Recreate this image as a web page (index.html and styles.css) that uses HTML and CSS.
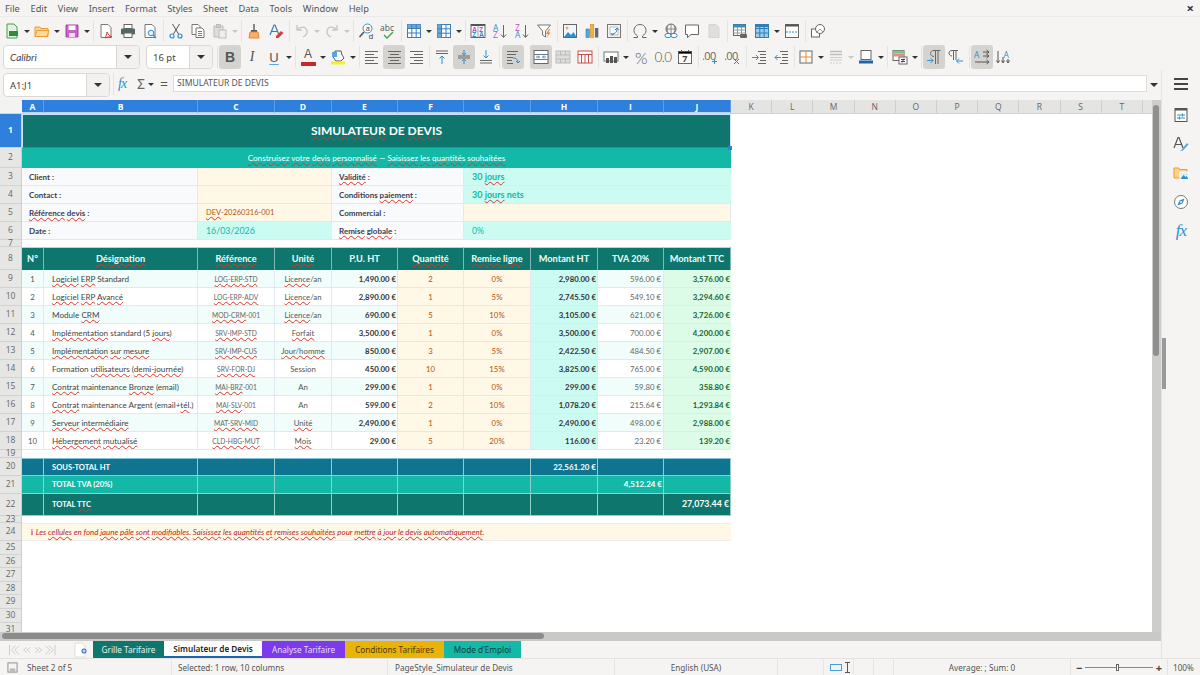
FILE: index.html
```html
<!DOCTYPE html>
<html lang="en">
<head>
	<meta charset="UTF-8">
	<title>Simulateur de Devis</title>
	<link rel="stylesheet" href="styles.css">
</head>
<body>
	<!-- menu -->
	<div class="menubar">
		<span>File</span><span>Edit</span><span>View</span><span>Insert</span><span>Format</span><span>Styles</span><span>Sheet</span><span>Data</span><span>Tools</span><span>Window</span><span>Help</span>
		<span class="close">×</span>
	</div>

	<!-- standard toolbar -->
	<div class="toolbar tb1">
		<div class="b"><svg viewBox="0 0 16 16"><path d="M3 1h7l3 3v11H3z" fill="#e4f3e4" stroke="#43a047"/><rect x="5" y="8" width="9" height="5" fill="#2e8b3d"/></svg></div><div class="d"></div>
		<div class="b"><svg viewBox="0 0 16 16"><path d="M1 4h5l1 1.500h7V13.500H1z" fill="#fbd28a" stroke="#ed9b33"/><path d="M1 13.500 3 7.500h12l-2 6z" fill="#fcdc9e" stroke="#ed9b33"/></svg></div><div class="d"></div>
		<div class="b"><svg viewBox="0 0 16 16"><path d="M2 2h12v12H2z" fill="#c765c7" stroke="#a845a8"/><rect x="4.500" y="2.500" width="7" height="4.500" fill="#fff"/><rect x="5" y="10" width="6" height="4" fill="#f0d8f0"/></svg></div><div class="d"></div>
		<div class="s"></div>
		<div class="b"><svg viewBox="0 0 16 16"><path d="M3 1.500h7l3 3v10H3z" fill="#fff" stroke="#777"/><path d="M9 9c1 3 3 4 5 5-3-.5-5 0-7 1 1-2 2-4 2-6z" fill="none" stroke="#d8382f"/></svg></div>
		<div class="b"><svg viewBox="0 0 16 16"><rect x="4" y="1.500" width="8" height="4" fill="#fff" stroke="#666"/><rect x="1" y="5.500" width="14" height="6" rx="1" fill="#566"/><rect x="4" y="10" width="8" height="4.500" fill="#fff" stroke="#666"/></svg></div>
		<div class="b"><svg viewBox="0 0 16 16"><path d="M3 1.500h7l3 3v10H3z" fill="#fff" stroke="#777"/><circle cx="9" cy="10" r="2.800" fill="#e3f1fa" stroke="#2f8fcf"/><path d="m11 12 3 3" stroke="#2f8fcf" stroke-width="1.300"/></svg></div>
		<div class="s"></div>
		<div class="b"><svg viewBox="0 0 16 16"><path d="M4.500 1 10.500 11M11.500 1 5.500 11" stroke="#555" fill="none"/><circle cx="4" cy="13" r="2" fill="none" stroke="#2f8fcf" stroke-width="1.200"/><circle cx="12" cy="13" r="2" fill="none" stroke="#2f8fcf" stroke-width="1.200"/></svg></div>
		<div class="b"><svg viewBox="0 0 16 16"><path d="M2 1.500h6l2 2v8H2z" fill="#fff" stroke="#777"/><path d="M6 5h6l2 2v7.500H6z" fill="#fff" stroke="#777"/><path d="M8 8.500h4M8 10.500h4M8 12.500h4" stroke="#2f8fcf"/></svg></div>
		<div class="b"><svg viewBox="0 0 16 16"><rect x="2" y="3" width="9" height="11" fill="#ddd" stroke="#bbb"/><rect x="4.500" y="1.500" width="4" height="3" fill="#ccc" stroke="#bbb"/><rect x="7" y="7" width="7" height="8" fill="#eee" stroke="#bbb"/></svg></div><div class="d off"></div>
		<div class="s"></div>
		<div class="b"><svg viewBox="0 0 16 16"><rect x="7" y="1" width="2" height="6" fill="#888"/><rect x="5" y="7" width="6" height="2" fill="#555"/><path d="M4 9h8l1 6H3z" fill="#f6b26b" stroke="#ed8733"/></svg></div>
		<div class="b"><svg viewBox="0 0 16 16"><path d="M2 12 6 2h1l4 10M3.500 8.500h6" fill="none" stroke="#3a7dbd" stroke-width="1.200"/><path d="M8 13l5-5 2.500 2-5 5H8z" fill="#e53935"/></svg></div>
		<div class="s"></div>
		<div class="b"><svg viewBox="0 0 16 16"><path d="M3 2v5h5M3 7c3-4 9-4 10 1 .5 3-2 5-4 6" fill="none" stroke="#c6c6c6" stroke-width="1.300"/></svg></div><div class="d off"></div>
		<div class="b"><svg viewBox="0 0 16 16"><path d="M13 2v5H8M13 7c-3-4-9-4-10 1-.5 3 2 5 4 6" fill="none" stroke="#c6c6c6" stroke-width="1.300"/></svg></div><div class="d off"></div>
		<div class="s"></div>
		<div class="b"><svg viewBox="0 0 16 16"><circle cx="9.500" cy="5.500" r="4.500" fill="#fff" stroke="#2f8fcf"/><path d="m6 9-4.500 5" stroke="#555" stroke-width="1.600"/><text x="7.500" y="7.500" class="st">a</text><text x="10.500" y="15.500" class="st">d</text></svg></div>
		<div class="b"><svg viewBox="0 0 16 16"><text x="0" y="8" class="st wide">abc</text><path d="m4 12 3 3 6-6" fill="none" stroke="#43a047" stroke-width="1.300"/></svg></div>
		<div class="s"></div>
		<div class="b"><svg viewBox="0 0 16 16"><rect x="1.500" y="1.500" width="13" height="13" fill="#fff" stroke="#3a7dbd"/><path d="M1.500 1.500h13v4h-13z" fill="#6aa9d8"/><path d="M1.500 5.500h13M1.500 10h13M5.800 1.500v13M10.200 1.500v13" stroke="#3a7dbd"/></svg></div><div class="d"></div>
		<div class="b"><svg viewBox="0 0 16 16"><rect x="1.500" y="1.500" width="13" height="13" fill="#fff" stroke="#3a7dbd"/><path d="M1.500 1.500h4v13h-4z" fill="#6aa9d8"/><path d="M1.500 5.800h13M1.500 10.200h13M5.500 1.500v13M10 1.500v13" stroke="#3a7dbd"/></svg></div><div class="d"></div>
		<div class="s"></div>
		<div class="b"><svg viewBox="0 0 16 16"><rect x="1" y="1.500" width="14" height="13" fill="#fff" stroke="#666"/><path d="M1 2h14" stroke="#555" stroke-width="2"/><path d="M8 3v11" stroke="#999"/><text class="sa"><tspan x="2.200" y="9" class="pk">A</tspan><tspan x="2.200" y="14" class="bl">Z</tspan><tspan x="9.200" y="9" class="pk">Z</tspan><tspan x="9.200" y="14" class="bl">A</tspan></text></svg></div>
		<div class="b"><svg viewBox="0 0 16 16"><text class="sa big"><tspan x="1" y="7.500" class="bl">A</tspan><tspan x="1" y="15" class="pk">Z</tspan></text><path d="M11.500 2v12M9 11.500l2.500 3 2.500-3" fill="none" stroke="#666"/></svg></div>
		<div class="b"><svg viewBox="0 0 16 16"><text class="sa big"><tspan x="1" y="7.500" class="pk">Z</tspan><tspan x="1" y="15" class="bl">A</tspan></text><path d="M11.500 2v12M9 11.500l2.500 3 2.500-3" fill="none" stroke="#666"/></svg></div>
		<div class="b"><svg viewBox="0 0 16 16"><path d="M1.500 2h13L9.500 8v6l-3-2V8z" fill="#fff" stroke="#777"/><path d="M13 6l-3 5h2l-1.500 4 4-5.500h-2l1.500-3.500z" fill="#ed8733"/></svg></div>
		<div class="s"></div>
		<div class="b"><svg viewBox="0 0 16 16"><rect x="1.500" y="1.500" width="13" height="13" fill="#eef6fb" stroke="#666"/><circle cx="5" cy="5" r="1.500" fill="#f5b041"/><path d="M2 14l4-5 3 3 2.500-3 3 5z" fill="#2f8fcf"/></svg></div>
		<div class="b"><svg viewBox="0 0 16 16"><rect x="2" y="6" width="3.300" height="8.500" fill="#5aa6dc" stroke="#2f7fb8" stroke-width=".6"/><rect x="6.500" y="1.500" width="3.300" height="13" fill="#f5b041" stroke="#d08a1e" stroke-width=".6"/><rect x="11" y="5" width="3.300" height="9.500" fill="#5f6a72"/></svg></div>
		<div class="b"><svg viewBox="0 0 16 16"><rect x="1.500" y="1.500" width="13" height="13" fill="#f3f3f3" stroke="#777"/><path d="M4 4h8v8H4z" fill="#fff" stroke="#bbb"/><path d="M6 11c3 0 5-2 5-5M9 7l2-2 1.500 2M5 10l1 2 2-1" fill="none" stroke="#2f8fcf"/></svg></div>
		<div class="s"></div>
		<div class="b"><svg viewBox="0 0 16 16"><path d="M1.500 14.500h4v-1.500C3.500 11.500 2 10 2 7.500 2 4 4.500 1.500 8 1.500s6 2.500 6 6c0 2.500-1.500 4-3.500 5.500v1.500h4" fill="none" stroke="#666"/></svg></div><div class="d"></div>
		<div class="b tight"><svg viewBox="0 0 16 16"><circle cx="8" cy="6" r="5" fill="none" stroke="#666"/><path d="M3 6h10M8 1v10M5 2.500c-1 2-1 5 0 7M11 2.500c1 2 1 5 0 7" fill="none" stroke="#666" stroke-width=".7"/><rect x="2" y="10.500" width="6" height="4" rx="2" fill="#fff" stroke="#2f8fcf"/><rect x="8" y="10.500" width="6" height="4" rx="2" fill="#fff" stroke="#2f8fcf"/></svg></div>
		<div class="b"><svg viewBox="0 0 16 16"><path d="M1.500 2h13v9.500H7L3.500 14.500v-3h-2z" fill="#fff" stroke="#666"/></svg></div>
		<div class="b"><svg viewBox="0 0 16 16"><path d="M3 1.500h7l3 3v10H3z" fill="#dedede" stroke="#d4d4d4"/></svg></div>
		<div class="s"></div>
		<div class="b"><svg viewBox="0 0 16 16"><rect x="1.500" y="1.500" width="12" height="11" fill="#fff" stroke="#666"/><path d="M1.500 1.500h12v3h-12z" fill="#2f8fcf"/><path d="M1.500 7h12M1.500 10h12M5.500 4v8M9.500 4v8" stroke="#999"/><rect x="8" y="11" width="7" height="4" rx="1" fill="#666"/></svg></div>
		<div class="b"><svg viewBox="0 0 16 16"><rect x="1.500" y="1.500" width="13" height="13" fill="#9ccbe8" stroke="#2f7fb8"/><path d="M1.500 5.500h13M1.500 10h13M5.800 1.500v13M10.200 1.500v13" stroke="#2f7fb8"/><path d="M1.500 1.500h13v2.500h-13z" fill="#2f7fb8"/></svg></div><div class="d"></div>
		<div class="b"><svg viewBox="0 0 16 16"><rect x="1.500" y="1.500" width="13" height="13" fill="#fff" stroke="#666"/><path d="M1.500 1.500h13v2h-13z" fill="#555"/><path d="M2 9h12" stroke="#2f8fcf" stroke-dasharray="2 1"/></svg></div>
		<div class="s"></div>
		<div class="b"><svg viewBox="0 0 16 16"><rect x="1.500" y="6" width="8" height="8" fill="#fff" stroke="#666"/><circle cx="10" cy="6" r="4.500" fill="#fff" stroke="#666"/><path d="m6 10 4-4 3 3" fill="none" stroke="#999"/></svg></div>
	</div>

	<!-- formatting toolbar -->
	<div class="toolbar tb2">
		<div class="combo font"><span class="val it">Calibri</span><span class="arrow"></span></div>
		<div class="combo size"><span class="val">16 pt</span><span class="arrow"></span></div>
		<div class="s"></div>
		<div class="b on txt bold">B</div>
		<div class="b txt ital">I</div>
		<div class="b txt under">U</div><div class="d"></div>
		<div class="s"></div>
		<div class="b txt col">A<i class="red"></i></div><div class="d"></div>
		<div class="b"><svg viewBox="0 0 16 16"><path d="M5 2h6l1 4 2 3-3 3H6L3 8z" fill="#fff" stroke="#555"/><rect x="2" y="3" width="5" height="5" fill="#5aa6dc"/><rect x="1" y="12.500" width="14" height="3" fill="#f5ef2a"/></svg></div><div class="d"></div>
		<div class="s"></div>
		<div class="b lines al"><i></i><i></i><i></i><i></i><i></i></div>
		<div class="b on lines ac"><i></i><i></i><i></i><i></i><i></i></div>
		<div class="b lines ar"><i></i><i></i><i></i><i></i><i></i></div>
		<div class="s"></div>
		<div class="b"><svg viewBox="0 0 16 16"><path d="M2 2h12M2 4.500h12" stroke="#666"/><path d="M8 15V7M5.500 9.500 8 7l2.500 2.500" fill="none" stroke="#2f8fcf"/></svg></div>
		<div class="b on"><svg viewBox="0 0 16 16"><path d="M2 7h12M2 9h12" stroke="#666"/><path d="M8 1v5M6 4l2 2 2-2M8 15v-5M6 12l2-2 2 2" fill="none" stroke="#2f8fcf"/></svg></div>
		<div class="b"><svg viewBox="0 0 16 16"><path d="M2 11.500h12M2 14h12" stroke="#666"/><path d="M8 1v8M5.500 6.500 8 9l2.500-2.500" fill="none" stroke="#2f8fcf"/></svg></div>
		<div class="s wide"></div>
		<div class="b on"><svg viewBox="0 0 16 16"><path d="M2 2.500h11M2 5.500h9M2 8.500h6M2 11.500h5M2 14.500h6" stroke="#666"/><path d="M8 9c2 0 5 1 5 4M11 12l2 2 2-2" fill="none" stroke="#2f8fcf"/></svg></div>
		<div class="g5"></div>
		<div class="b on"><svg viewBox="0 0 16 16"><rect x="1" y="1.500" width="14" height="13" fill="#fff" stroke="#666"/><path d="M1 5.500h14M1 10.500h14" stroke="#777"/><path d="M3 8h3M10 8h3M5 6.500 6.500 8 5 9.500M11 6.500 9.500 8 11 9.500" fill="none" stroke="#2f8fcf"/></svg></div>
		<div class="b"><svg viewBox="0 0 16 16"><rect x="1" y="2" width="14" height="12" fill="#ddd" stroke="#bbb"/><path d="M1 6h14M1 10h14M5.500 2v4M10.500 2v4M5.500 10v4M10.500 10v4" stroke="#bbb"/></svg></div>
		<div class="b"><svg viewBox="0 0 16 16"><rect x="1" y="2" width="14" height="12" fill="#fff" stroke="#c9504a"/><path d="M1 5.500h14M4.500 5.500V14M8 5.500V14M11.500 5.500V14" stroke="#c9504a"/></svg></div>
		<div class="s"></div>
		<div class="b"><svg viewBox="0 0 16 16"><rect x="1" y="3" width="14" height="9" fill="#fff" stroke="#777"/><rect x="3" y="9" width="3" height="5" fill="#555"/><rect x="7" y="7" width="3" height="7" fill="#555"/><rect x="11" y="8" width="3" height="6" fill="#555"/></svg></div><div class="d"></div>
		<div class="b txt sym pct">%</div>
		<div class="b txt sym">0.0</div>
		<div class="b"><svg viewBox="0 0 16 16"><rect x="1.500" y="2.500" width="13" height="12" fill="#fff" stroke="#666"/><path d="M1.500 2.500h13v2h-13zM4.500 1v2M11.500 1v2" stroke="#555"/><text x="5.300" y="13" class="sa dk">7</text></svg></div>
		<div class="s"></div>
		<div class="b"><svg viewBox="0 0 16 16"><text x="-1" y="11" class="sn">.00</text><path d="M11.500 10v5M9 12.500h5" stroke="#2f8fcf"/></svg></div>
		<div class="b"><svg viewBox="0 0 16 16"><text x="-1" y="11" class="sn">.00</text><path d="m9 10 5 5M14 10l-5 5" stroke="#e53935"/></svg></div>
		<div class="s"></div>
		<div class="b"><svg viewBox="0 0 16 16"><path d="M7 2.500h8M9 5.500h6M9 8.500h6M9 11.500h6M7 14.500h8" stroke="#666"/><path d="M1 8.500h6M5 6l2.500 2.500L5 11" fill="none" stroke="#2f8fcf"/></svg></div>
		<div class="b"><svg viewBox="0 0 16 16"><path d="M7 2.500h8M9 5.500h6M9 8.500h6M9 11.500h6M7 14.500h8" stroke="#666"/><path d="M8 8.500H2M4.500 6 2 8.500 4.500 11" fill="none" stroke="#2f8fcf"/></svg></div>
		<div class="s thin"></div>
		<div class="b"><svg viewBox="0 0 16 16"><rect x="2" y="2" width="12" height="12" fill="#fff" stroke="#666"/><path d="M8 2v12M2 8h12" stroke="#ed8733"/></svg></div><div class="d"></div>
		<div class="b"><svg viewBox="0 0 16 16"><path d="M2 2.500h12M2 5.500h12" stroke="#bbb" stroke-width="1.500"/><path d="M2 8.500h12M2 11h12" stroke="#ccc"/><path d="M2 14h12" stroke="#ccc" stroke-dasharray="2 1"/></svg></div><div class="d off"></div>
		<div class="b"><svg viewBox="0 0 16 16"><rect x="3" y="1.500" width="10" height="9" fill="#fff" stroke="#666"/><path d="M1 11.500h14v3H1z" fill="#1f66a8"/></svg></div><div class="d"></div>
		<div class="s"></div>
		<div class="b"><svg viewBox="0 0 16 16"><rect x="1" y="1.500" width="11" height="10" fill="#fff" stroke="#666"/><path d="M1 1.500h11v3H1z" fill="#7cc48a"/><path d="M1 4.500h11v3H1z" fill="#e98a85"/><rect x="7" y="8" width="8" height="7" fill="#fff" stroke="#666"/><path d="M9 10.500h4M9 12.500h4M12 9.500 10 13.500" stroke="#444" fill="none"/></svg></div><div class="d"></div>
		<div class="s"></div>
		<div class="b on"><svg viewBox="0 0 16 16"><path d="M12 2v13M9.500 2v13M14.500 1.500H8c-2.500 0-3.500 1.500-3.500 3S6 7.500 8 7.500" fill="none" stroke="#666"/><path d="M1 11.500h6M4.500 9 7 11.500 4.500 14" fill="none" stroke="#2f8fcf"/></svg></div>
		<div class="b"><svg viewBox="0 0 16 16"><path d="M8 2v9M5.500 2v9M10 1.500H4c-2 0-3 1-3 2.500s1 3 3 3" fill="none" stroke="#666"/><path d="M9 12h6M11 9.500 8.500 12 11 14.500" fill="none" stroke="#2f8fcf"/></svg></div>
		<div class="s"></div>
		<div class="b on"><svg viewBox="0 0 16 16"><text x="0" y="8.500" class="sa bl big">A</text><path d="M9 3h6M9 7h6M12.500 1 15 3l-2.500 2M12.500 5 15 7l-2.500 2M1 13h14M12.500 11 15 13l-2.500 2" fill="none" stroke="#555"/></svg></div>
		<div class="b"><svg viewBox="0 0 16 16"><text x="7.500" y="8.500" class="sa bl big">A</text><path d="M2 2v11M7 8v5M12 10v3M.5 11.500 2 14l1.500-2.500M5.500 11.500 7 14l1.500-2.500M10.500 11.500 12 14l1.500-2.500" fill="none" stroke="#555"/></svg></div>
	</div>

	<div class="main">
		<div class="work">
			<!-- formula bar -->
			<div class="formula">
				<div class="combo name"><span class="val">A1:J1</span><span class="arrow"></span></div>
				<div class="s"></div>
				<span class="fx">fx</span>
				<span class="sigma">Σ</span><div class="d"></div>
				<span class="eq">=</span>
				<div class="input">SIMULATEUR DE DEVIS</div>
				<div class="d wide"></div>
			</div>

			<div class="sheetrow">
				<div class="sheet">
					<div class="cols">
						<div class="corner"></div>
						<span class="sel w22">A</span><span class="sel w154">B</span><span class="sel w77">C</span><span class="sel w57">D</span><span class="sel w66">E</span><span class="sel w66">F</span><span class="sel w67">G</span><span class="sel w67">H</span><span class="sel w66">I</span><span class="sel w67">J</span>
						<span>K</span><span>L</span><span>M</span><span>N</span><span>O</span><span>P</span><span>Q</span><span>R</span><span>S</span><span>T</span>
					</div>
					<div class="grid">
						<div class="rh cur">1</div>
						<div class="title span10"><span><u>SIMULATEUR</u> DE <u>DEVIS</u></span><i class="handle"></i></div>

						<div class="rh">2</div>
						<div class="subtitle span10"><u>Construisez</u> <u>votre</u> <u>devis</u> <u>personnalisé</u> — <u>Saisissez</u> <u>les</u> <u>quantités</u> <u>souhaitées</u></div>

						<div class="rh">3</div>
						<div class="lbl span2">Client :</div><div class="inp span2"></div><div class="lbl span2"><u>Validité</u> :</div><div class="mint span4">30 <u>jours</u></div>
						<div class="rh">4</div>
						<div class="lbl span2">Contact :</div><div class="inp span2"></div><div class="lbl span2">Conditions <u>paiement</u> :</div><div class="mint span4">30 <u>jours</u> nets</div>
						<div class="rh">5</div>
						<div class="lbl span2"><u>Référence</u> <u>devis</u> :</div><div class="inp span2"><u>DEV</u>-20260316-001</div><div class="lbl span2">Commercial :</div><div class="inp span4"></div>
						<div class="rh">6</div>
						<div class="lbl span2">Date :</div><div class="mint big span2">16/03/2026</div><div class="lbl span2"><u>Remise</u> <u>globale</u> :</div><div class="mint big span4">0%</div>

						<div class="rh">7</div><div class="blank span10"></div>

						<div class="rh">8</div>
						<div class="th">N°</div><div class="th"><u>Désignation</u></div><div class="th"><u>Référence</u></div><div class="th"><u>Unité</u></div><div class="th">P.U. HT</div><div class="th"><u>Quantité</u></div><div class="th"><u>Remise</u> <u>ligne</u></div><div class="th">Montant HT</div><div class="th tva">TVA 20%</div><div class="th">Montant TTC</div>

						<div class="rh">9</div>
						<div class="c num alt">1</div><div class="c des alt"><u>Logiciel</u> <u>ERP</u> Standard</div><div class="c ref alt"><u>LOG-ERP-STD</u></div><div class="c uni alt"><u>Licence</u>/an</div><div class="c pu alt">1,490.00 €</div><div class="c qty">2</div><div class="c qty">0%</div><div class="c ht">2,980.00 €</div><div class="c tv alt">596.00 €</div><div class="c ttc">3,576.00 €</div>
						<div class="rh">10</div>
						<div class="c num">2</div><div class="c des"><u>Logiciel</u> <u>ERP</u> <u>Avancé</u></div><div class="c ref"><u>LOG-ERP-ADV</u></div><div class="c uni"><u>Licence</u>/an</div><div class="c pu">2,890.00 €</div><div class="c qty">1</div><div class="c qty">5%</div><div class="c ht">2,745.50 €</div><div class="c tv">549.10 €</div><div class="c ttc">3,294.60 €</div>
						<div class="rh">11</div>
						<div class="c num alt">3</div><div class="c des alt">Module <u>CRM</u></div><div class="c ref alt"><u>MOD-CRM</u>-001</div><div class="c uni alt"><u>Licence</u>/an</div><div class="c pu alt">690.00 €</div><div class="c qty">5</div><div class="c qty">10%</div><div class="c ht">3,105.00 €</div><div class="c tv alt">621.00 €</div><div class="c ttc">3,726.00 €</div>
						<div class="rh">12</div>
						<div class="c num">4</div><div class="c des"><u>Implémentation</u> standard (5 <u>jours</u>)</div><div class="c ref"><u>SRV-IMP-STD</u></div><div class="c uni"><u>Forfait</u></div><div class="c pu">3,500.00 €</div><div class="c qty">1</div><div class="c qty">0%</div><div class="c ht">3,500.00 €</div><div class="c tv">700.00 €</div><div class="c ttc">4,200.00 €</div>
						<div class="rh">13</div>
						<div class="c num alt">5</div><div class="c des alt"><u>Implémentation</u> <u>sur</u> <u>mesure</u></div><div class="c ref alt"><u>SRV-IMP-CUS</u></div><div class="c uni alt"><u>Jour/homme</u></div><div class="c pu alt">850.00 €</div><div class="c qty">3</div><div class="c qty">5%</div><div class="c ht">2,422.50 €</div><div class="c tv alt">484.50 €</div><div class="c ttc">2,907.00 €</div>
						<div class="rh">14</div>
						<div class="c num">6</div><div class="c des">Formation <u>utilisateurs</u> (<u>demi-journée</u>)</div><div class="c ref"><u>SRV-FOR-DJ</u></div><div class="c uni">Session</div><div class="c pu">450.00 €</div><div class="c qty">10</div><div class="c qty">15%</div><div class="c ht">3,825.00 €</div><div class="c tv">765.00 €</div><div class="c ttc">4,590.00 €</div>
						<div class="rh">15</div>
						<div class="c num alt">7</div><div class="c des alt"><u>Contrat</u> maintenance <u>Bronze</u> (email)</div><div class="c ref alt"><u>MAI-BRZ</u>-001</div><div class="c uni alt">An</div><div class="c pu alt">299.00 €</div><div class="c qty">1</div><div class="c qty">0%</div><div class="c ht">299.00 €</div><div class="c tv alt">59.80 €</div><div class="c ttc">358.80 €</div>
						<div class="rh">16</div>
						<div class="c num">8</div><div class="c des"><u>Contrat</u> maintenance Argent (email+<u>tél</u>.)</div><div class="c ref"><u>MAI-SLV</u>-001</div><div class="c uni">An</div><div class="c pu">599.00 €</div><div class="c qty">2</div><div class="c qty">10%</div><div class="c ht">1,078.20 €</div><div class="c tv">215.64 €</div><div class="c ttc">1,293.84 €</div>
						<div class="rh">17</div>
						<div class="c num alt">9</div><div class="c des alt"><u>Serveur</u> <u>intermédiaire</u></div><div class="c ref alt"><u>MAT-SRV-MID</u></div><div class="c uni alt"><u>Unité</u></div><div class="c pu alt">2,490.00 €</div><div class="c qty">1</div><div class="c qty">0%</div><div class="c ht">2,490.00 €</div><div class="c tv alt">498.00 €</div><div class="c ttc">2,988.00 €</div>
						<div class="rh">18</div>
						<div class="c num">10</div><div class="c des"><u>Hébergement</u> <u>mutualisé</u></div><div class="c ref"><u>CLD-HBG-MUT</u></div><div class="c uni"><u>Mois</u></div><div class="c pu">29.00 €</div><div class="c qty">5</div><div class="c qty">20%</div><div class="c ht">116.00 €</div><div class="c tv">23.20 €</div><div class="c ttc">139.20 €</div>

						<div class="rh">19</div><div class="blank span10"></div>

						<div class="rh">20</div>
						<div class="t sub"></div><div class="t sub lab">SOUS-TOTAL HT</div><div class="t sub"></div><div class="t sub"></div><div class="t sub"></div><div class="t sub"></div><div class="t sub"></div><div class="t sub amt">22,561.20 €</div><div class="t sub"></div><div class="t sub"></div>
						<div class="rh">21</div>
						<div class="t vat"></div><div class="t vat lab">TOTAL TVA (20%)</div><div class="t vat"></div><div class="t vat"></div><div class="t vat"></div><div class="t vat"></div><div class="t vat"></div><div class="t vat"></div><div class="t vat amt">4,512.24 €</div><div class="t vat"></div>
						<div class="rh">22</div>
						<div class="t tot"></div><div class="t tot lab">TOTAL <u>TTC</u></div><div class="t tot"></div><div class="t tot"></div><div class="t tot"></div><div class="t tot"></div><div class="t tot"></div><div class="t tot"></div><div class="t tot"></div><div class="t tot amt big">27,073.44 €</div>

						<div class="rh">23</div><div class="blank span10"></div>

						<div class="rh">24</div>
						<div class="note span10"><span class="warn">ℹ</span> Les <u>cellules</u> en fond <u>jaune</u> <u>pâle</u> <u>sont</u> <u>modifiables</u>. <u>Saisissez</u> <u>les</u> <u>quantités</u> <u>et</u> <u>remises</u> <u>souhaitées</u> pour <u>mettre</u> <u>à</u> <u>jour</u> <u>le</u> <u>devis</u> <u>automatiquement</u>.</div>

						<div class="rh">25</div><div class="blank span10"></div>
						<div class="rh">26</div><div class="blank span10"></div>
						<div class="rh">27</div><div class="blank span10"></div>
						<div class="rh">28</div><div class="blank span10"></div>
						<div class="rh">29</div><div class="blank span10"></div>
						<div class="rh">30</div><div class="blank span10"></div>
						<div class="rh">31</div><div class="blank span10"></div>
					</div>
				</div>
				<div class="vscroll"><div class="vthumb"></div></div>
			</div>

			<div class="hscroll"><div class="hthumb"></div></div>

			<!-- sheet tabs -->
			<div class="tabs">
				<div class="nav"><svg viewBox="0 0 60 16"><path d="M2 2v12M9 3 4 8l5 5M13 3 8 8l5 5M22 5l-4 3 4 3M26 5l-4 3 4 3M31 5l4 3-4 3M35 5l4 3-4 3M43 3l5 5-5 5M47 3l5 5-5 5M54 2v12" fill="none" stroke="#c9c9c9"/></svg></div>
				<div class="newsheet"><svg viewBox="0 0 14 16"><path d="M1 1h7l3 3v11H1z" fill="#fff" stroke="#ddd"/><circle cx="10" cy="9" r="2.500" fill="#2f6fb0"/><path d="M8.500 9h3M10 7.500v3" stroke="#fff"/></svg></div>
				<div class="tab t1">Grille Tarifaire</div>
				<div class="tab t2">Simulateur de Devis</div>
				<div class="tab t3">Analyse Tarifaire</div>
				<div class="tab t4">Conditions Tarifaires</div>
				<div class="tab t5">Mode d'Emploi</div>
			</div>
		</div>

		<!-- sidebar -->
		<div class="deck">
			<i class="grip"></i>
			<div class="ham"><i></i><i></i><i></i></div>
			<svg viewBox="0 0 16 16"><rect x="2" y="1.500" width="12" height="13" fill="#fff" stroke="#555"/><path d="M2 1.500h12v2H2z" fill="#555"/><path d="M4 8h8M4 11h8" stroke="#2f8fcf"/><path d="M9.500 6.500v3M6.500 9.500v3" stroke="#2f8fcf"/></svg>
			<svg viewBox="0 0 16 16"><path d="M1 12 5 1.500h1L10 12M2.500 8.500h6" fill="none" stroke="#555" stroke-width="1.200"/><path d="M6 15c2 0 3-1 3-2l5-6 1.500 1.500-5 5.500c-1 1-3 1-4.500 1z" fill="#5aa6dc"/></svg>
			<svg viewBox="0 0 16 16"><path d="M1 3h5l1 1.500h7V13H1z" fill="#fbd28a" stroke="#ed9b33"/><rect x="7" y="7" width="8.500" height="7.500" fill="#dcecf8" stroke="#fff"/><path d="M7.500 14l3-4 2 2 1-1 2 3z" fill="#2f8fcf"/></svg>
			<svg viewBox="0 0 16 16"><circle cx="8" cy="8" r="6.500" fill="#fff" stroke="#777"/><path d="M11.500 4.500 9.500 9.500 4.500 11.500 6.500 6.500z" fill="#2f8fcf"/><circle cx="8" cy="8" r="1" fill="#fff"/></svg>
			<span class="fx side">fx</span>
		</div>
	</div>

	<!-- status bar -->
	<div class="status">
		<div class="st-a"><svg viewBox="0 0 12 12"><rect x="1" y="1" width="10" height="10" fill="none" stroke="#888"/><rect x="3" y="7" width="6" height="4" fill="#bbb"/></svg><span>Sheet 2 of 5</span></div>
		<div class="st-b">Selected: 1 row, 10 columns</div>
		<div class="st-c">PageStyle_Simulateur de Devis</div>
		<div class="st-d">English (USA)</div>
		<div class="st-j"></div>
		<div class="st-e"><i class="rect"></i><i class="cursor"></i></div>
		<div class="st-f"></div>
		<div class="st-f"></div>
		<div class="st-g">Average: ; Sum: 0</div>
		<div class="st-h"><b>−</b><i class="track"><i class="knob"></i></i><b>+</b></div>
		<div class="st-i">100%</div>
	</div>
</body>
</html>
```

FILE: styles.css
```css
* {
	box-sizing: border-box;
}
html, body {
	margin: 0;
	padding: 0;
}
body {
	width: 1200px;
	height: 675px;
	overflow: hidden;
	background: #f5f4f2;
	font-family: "Noto Sans", sans-serif;
	color: #444;
	display: flex;
	flex-direction: column;
}

/* menu */
.menubar {
	height: 17px;
	display: flex;
	align-items: center;
	font-size: 9.3px;
	color: #555;
	padding-left: 5px;
	gap: 10.600px;
	border-bottom: 1px solid #ebebe9;
}
.menubar .close {
	margin-left: auto;
	margin-right: 6px;
	font-size: 13px;
	font-weight: bold;
	color: #333;
}

/* toolbars */
.toolbar {
	display: flex;
	align-items: center;
	flex: none;
}
.tb1 {
	height: 27px;
	padding-left: 1px;
}
.tb2 {
	height: 26px;
	padding-left: 3px;
}
.b {
	width: 22px;
	height: 24px;
	flex: none;
	display: flex;
	align-items: center;
	justify-content: center;
	border-radius: 3px;
	position: relative;
}
.b.tight {
	margin-left: 1px;
	margin-right: -1px;
}
.b svg {
	width: 16px;
	height: 16px;
}
.b.on {
	background: #d5d3d0;
}
.d {
	width: 8px;
	height: 24px;
	flex: none;
	position: relative;
}
.d::after {
	content: "";
	position: absolute;
	left: 1px;
	top: 11px;
	border: 3px solid transparent;
	border-top: 3px solid #333;
	border-bottom: 0;
}
.d.off::after {
	border-top-color: #c6c6c6;
}
.d.wide {
	width: 14px;
}
.d.wide::after {
	left: 3px;
	border-width: 4px 4px 0;
}
.s {
	width: 4px;
	height: 22px;
	flex: none;
	position: relative;
}
.s::after {
	content: "";
	position: absolute;
	left: 2px;
	top: 0;
	bottom: 0;
	width: 1px;
	background: #e4e3e1;
}
.s.wide {
	width: 5px;
}
.s.thin {
	width: 3px;
}
.g5 {
	width: 6px;
	flex: none;
}

svg text {
	font-family: "Open Sans", sans-serif;
}
.st {
	font-size: 8px;
	fill: #444;
}
.st.wide {
	font-size: 8.5px;
	fill: #555;
}
.sa {
	font-size: 6.5px;
	font-weight: bold;
}
.sa.big {
	font-size: 8.5px;
	font-weight: normal;
}
.pk {
	fill: #c04fc0;
}
.bl {
	fill: #2f8fcf;
}
.dk {
	fill: #444;
	font-size: 9px;
}
.sn {
	font-size: 11px;
	fill: #666;
	letter-spacing: -.6px;
}

/* combo boxes */
.combo {
	height: 24px;
	display: flex;
	flex: none;
	background: #fff;
	border: 1px solid #d9d8d5;
	border-radius: 4px;
	font-size: 9.5px;
	color: #444;
	align-items: stretch;
}
.combo .val {
	flex: 1;
	display: flex;
	align-items: center;
	padding-left: 6px;
}
.combo .it {
	font-family: "Lato", sans-serif;
	font-style: italic;
	font-size: 10px;
}
.combo .arrow {
	width: 23px;
	background: #f2f1ef;
	border-left: 1px solid #d9d8d5;
	position: relative;
	border-radius: 0 4px 4px 0;
}
.combo .arrow::after {
	content: "";
	position: absolute;
	left: 7px;
	top: 9px;
	border: 4px solid transparent;
	border-top: 4px solid #333;
	border-bottom: 0;
}
.combo.font {
	width: 137px;
	margin-right: 6px;
}
.combo.size {
	width: 67px;
	margin-right: 2px;
}
.combo.name {
	width: 107px;
	margin-left: 3px;
}

.txt {
	font-family: "Liberation Serif", serif;
	font-size: 14px;
	color: #555;
}
.bold {
	font-family: "Liberation Sans", sans-serif;
	font-weight: bold;
}
.ital {
	font-style: italic;
}
.under {
	font-family: "Liberation Sans", sans-serif;
	font-size: 13px;
	text-decoration: underline;
	text-decoration-color: #5aa6dc;
	text-underline-offset: 2px;
}
.col {
	font-family: "Liberation Sans", sans-serif;
	font-size: 12px;
	align-items: flex-start;
	padding-top: 2px;
}
.col .red {
	position: absolute;
	left: 4px;
	right: 3px;
	top: 17px;
	height: 4px;
	background: #c8282b;
}
.sym {
	font-family: "Lato", sans-serif;
	font-weight: 300;
	font-size: 13.500px;
	letter-spacing: -.6px;
}
.pct {
	font-size: 16px;
}
.lines {
	flex-direction: column;
	gap: 2px;
}
.lines i {
	display: block;
	height: 1px;
	background: #666;
	width: 13px;
}
.lines i:nth-child(even) {
	width: 9px;
}
.al {
	align-items: flex-start;
	padding-left: 4px;
}
.ar {
	align-items: flex-end;
	padding-right: 4px;
}

/* main area */
.main {
	flex: 1;
	display: flex;
	min-height: 0;
}
.work {
	width: 1161px;
	flex: none;
	display: flex;
	flex-direction: column;
}

/* formula bar */
.formula {
	height: 30px;
	flex: none;
	display: flex;
	align-items: flex-start;
	padding-top: 3px;
}
.formula .s {
	margin-left: 1px;
	margin-right: 3px;
}
.fx {
	font-family: "Liberation Serif", serif;
	font-style: italic;
	font-size: 14px;
	color: #2f8fcf;
	line-height: 22px;
	width: 16px;
	letter-spacing: -1px;
}
.sigma {
	font-size: 14px;
	color: #666;
	line-height: 22px;
	width: 12px;
	text-align: center;
	margin-left: 1px;
}
.formula .d {
	height: 22px;
}
.formula .d::after {
	top: 10px;
}
.eq {
	font-size: 14px;
	line-height: 22px;
	color: #555;
	width: 12px;
	text-align: center;
	margin: 0 3px 0 3px;
}
.input {
	flex: 1;
	height: 17px;
	margin-top: 2px;
	background: #fff;
	border: 1px solid #dedddb;
	font-size: 8.600px;
	line-height: 15px;
	padding-left: 3px;
	color: #555;
}

/* sheet */
.sheetrow {
	flex: none;
	height: 532px;
	display: flex;
}
.sheet {
	width: 1152px;
	flex: none;
	background: #fff;
	overflow: hidden;
}
.cols {
	height: 14px;
	display: flex;
	background: #e4e4e2;
	font-family: "Open Sans", sans-serif;
	font-size: 8.500px;
	color: #666;
	border-bottom: 1px solid #d4d4d2;
}
.cols .corner {
	width: 22px;
	background: #f3f3f1;
}
.cols span {
	width: 41.200px;
	flex: none;
	text-align: center;
	line-height: 14px;
	border-right: 1px solid #cfcfcd;
}
.cols .sel {
	background: #2f7fdc;
	color: #fff;
	font-weight: bold;
	border-right: 1px solid #5f9ce4;
	border-bottom: 1px solid #bcd6f5;
}
.w22 { width: 22px !important; }
.w154 { width: 154px !important; }
.w77 { width: 77px !important; }
.w57 { width: 57px !important; }
.w66 { width: 66px !important; }
.w67 { width: 67px !important; }

.grid {
	width: 731px;
	display: grid;
	grid-template-columns: 22px 22px 154px 77px 57px 66px 66px 67px 67px 66px 67px;
	grid-template-rows: 34px 20px 18px 18px 18px 18px 7px 23px repeat(10, 18px) 8px 18px 18px 22px 7px 18px repeat(7, 13.600px);
	font-family: "Lato", sans-serif;
	font-size: 7.800px;
	color: #444;
}
.span2 { grid-column: span 2; }
.span4 { grid-column: span 4; }
.span10 { grid-column: span 10; }

.rh {
	background: #e6e6e4;
	border-right: 1px solid #cfcfcd;
	border-bottom: 1px solid #d2d2d0;
	font-family: "Open Sans", sans-serif;
	font-size: 8.500px;
	line-height: 1;
	color: #666;
	display: flex;
	align-items: center;
	justify-content: center;
}
.rh.cur {
	background: #2f7fdc;
	color: #fff;
	font-weight: bold;
}

u {
	text-decoration: underline wavy #d8352a;
	text-decoration-thickness: 1px;
	text-underline-offset: .5px;
	text-decoration-skip-ink: none;
}
.title {
	background: #0f766e;
	color: #fff;
	font-size: 12px;
	font-weight: bold;
	display: flex;
	align-items: center;
	justify-content: center;
	padding-bottom: 2px;
	position: relative;
	border: 1px solid #cfe4f7;
	border-bottom-color: #2f7fdc;
}
.handle {
	position: absolute;
	right: -2px;
	bottom: -3px;
	width: 4px;
	height: 4px;
	background: #2f7fdc;
}
.subtitle {
	background: #14b8a6;
	color: #fff;
	font-size: 8.100px;
	line-height: 20px;
	text-align: center;
	white-space: pre;
}
.lbl {
	background: #f8fafc;
	font-weight: bold;
	font-size: 8px;
	line-height: 18px;
	color: #374151;
	white-space: pre;
	padding-left: 7px;
	border-bottom: 1px solid #e2e8f0;
	border-right: 1px solid #e2e8f0;
}
.inp {
	background: #fff8e7;
	color: #b45309;
	font-size: 7.500px;
	line-height: 18px;
	white-space: pre;
	padding-left: 8px;
	border-bottom: 1px solid #e2e8f0;
	border-right: 1px solid #e2e8f0;
}
.mint {
	background: #ccfbf1;
	color: #14b8a6;
	font-weight: bold;
	font-size: 9px;
	line-height: 18px;
	white-space: pre;
	padding-left: 8px;
	border-bottom: 1px solid #e2e8f0;
}
.mint.big {
	font-size: 8.800px;
	font-weight: normal;
}
.blank {
	background: #fff;
}
.th {
	background: #0f766e;
	color: #f0fdfa;
	font-weight: bold;
	font-size: 9.200px;
	line-height: 22px;
	text-align: center;
	white-space: pre;
	border-right: 1px solid #7fb8b2;
	border-top: 1px solid #b5d6d3;
}
.th.tva {
	font-size: 9px;
}

.c {
	line-height: 18px;
	white-space: pre;
	overflow: hidden;
	background: #fff;
	border-right: 1px solid #e2e8f0;
	border-bottom: 1px solid #e2e8f0;
}
.c.alt {
	background: #f0fdfa;
}
.num {
	text-align: center;
	color: #555;
}
.des {
	padding-left: 8px;
	font-size: 8.150px;
	color: #444;
}
.ref {
	text-align: center;
	color: #666;
	font-size: 6.700px;
}
.uni {
	text-align: center;
	color: #555;
}
.pu {
	text-align: right;
	font-weight: bold;
	color: #333;
	padding-right: 1px;
}
.qty {
	background: #fff8e7;
	color: #b45309;
	text-align: center;
}
.ht {
	background: #ccfbf1;
	font-weight: bold;
	color: #333;
	text-align: right;
	padding-right: 1px;
}
.tv {
	text-align: right;
	color: #666;
	padding-right: 2px;
}
.ttc {
	background: #dcfce7;
	font-weight: bold;
	color: #166534;
	text-align: right;
	padding-right: 1px;
	border-right: 0;
}

.t {
	color: #fff;
	font-weight: bold;
	font-size: 8px;
	line-height: 17px;
	white-space: pre;
	border-right: 1px solid #8fcfca;
	border-bottom: 1px solid #8fcfca;
}
.sub { background: #0e7490; border-top: 1px solid #7fc4d6; line-height: 16px; }
.vat { background: #14b8a6; }
.tot { background: #0f766e; line-height: 20px; }
.lab {
	padding-left: 8px;
	font-size: 7.600px;
}
.amt {
	text-align: right;
	padding-right: 1px;
}
.amt.big {
	font-size: 8.800px;
}
.note {
	background: #fff8e7;
	color: #b91c1c;
	font-style: italic;
	font-size: 7.900px;
	line-height: 16px;
	white-space: pre;
	padding-left: 9px;
	border-top: 1px solid #eeeeec;
	border-bottom: 1px solid #eeeeec;
}
.warn {
	font-weight: bold;
	color: #d8352a;
	font-style: normal;
	margin-right: 1px;
}

/* scrollbars */
.vscroll {
	width: 9px;
	flex: none;
	background: #cdcdcb;
	padding: 5px 1px 0 1px;
}
.vthumb {
	height: 251px;
	width: 6px;
	background: #8f8f8f;
	border-radius: 3px;
}
.hscroll {
	height: 9px;
	flex: none;
	background: #c9c9c7;
	padding: 1px 0 0 2px;
}
.hthumb {
	width: 542px;
	height: 6px;
	background: #8c8c8c;
	border-radius: 3px;
}

/* tabs */
.tabs {
	flex: 1;
	display: flex;
	align-items: stretch;
	font-size: 8.200px;
}
.nav {
	width: 65px;
	padding: 0 0 0 6px;
	display: flex;
	align-items: center;
}
.nav svg {
	width: 56px;
	height: 14px;
}
.newsheet {
	width: 28px;
	padding-left: 9px;
	display: flex;
	align-items: center;
}
.newsheet svg {
	width: 14px;
	height: 16px;
}
.tab {
	display: flex;
	align-items: center;
	justify-content: center;
	flex: none;
}
.t1 { width: 71px; background: #0f766e; color: #e6f4f2; }
.t2 { width: 98px; background: #fff; color: #222; font-weight: 600; border-bottom: 2px solid #1f66a8; }
.t3 { width: 83px; background: #7c3aed; color: #e9defc; }
.t4 { width: 99px; background: #eab308; color: #4a3a05; }
.t5 { width: 77px; background: #14b8a6; color: #10403c; }

/* sidebar */
.deck {
	flex: 1;
	position: relative;
	display: flex;
	flex-direction: column;
	align-items: center;
	border-left: 1px solid #e4e3e1;
	padding-top: 8px;
}
.deck svg {
	width: 16px;
	height: 16px;
	margin-bottom: 13px;
	flex: none;
}
.ham {
	height: 12px;
	width: 14px;
	margin-bottom: 17px;
	display: flex;
	flex-direction: column;
	justify-content: space-between;
}
.ham i {
	display: block;
	height: 2px;
	background: #444;
}
.fx.side {
	font-size: 17px;
	line-height: 16px;
	text-align: center;
	width: 20px;
}
.grip {
	position: absolute;
	left: 0;
	top: 268px;
	width: 4px;
	height: 51px;
	background: #9a9a9a;
}

/* status bar */
.status {
	height: 17px;
	flex: none;
	display: flex;
	align-items: center;
	font-size: 8.200px;
	color: #555;
	border-top: 1px solid #e4e3e1;
}
.status > div {
	height: 100%;
	display: flex;
	align-items: center;
	border-right: 1px solid #e6e5e3;
	flex: none;
}
.st-a { width: 172px; padding-left: 7px; gap: 9px; }
.st-a svg { width: 11px; height: 11px; }
.st-b { width: 216px; padding-left: 6px; }
.st-c { width: 227px; padding-left: 7px; }
.st-d { width: 163px; justify-content: center; }
.st-j { width: 46px; }
.st-e { width: 30px; padding-left: 6px; gap: 3px; }
.st-e .rect { width: 12px; height: 7px; border: 1px solid #4f9bd0; background: #eaf4fb; }
.st-e .cursor { width: 5px; height: 11px; border: solid #555; border-width: 1px 0; position: relative; }
.st-e .cursor::after { content: ""; position: absolute; left: 2px; top: 0; bottom: 0; width: 1px; background: #555; }
.st-f { width: 20px; }
.st-g { width: 177px; justify-content: center; }
.st-h { width: 97px; padding: 0 5px; gap: 3px; }
.st-h b { font-size: 11px; font-weight: bold; color: #444; }
.st-h .track { flex: 1; height: 1px; background: #888; position: relative; }
.st-h .knob { position: absolute; left: 31px; top: -3px; width: 3px; height: 7px; background: #fff; border: 1px solid #666; }
.st-i { flex: 1 !important; border-right: 0 !important; padding-left: 5px; }
```
